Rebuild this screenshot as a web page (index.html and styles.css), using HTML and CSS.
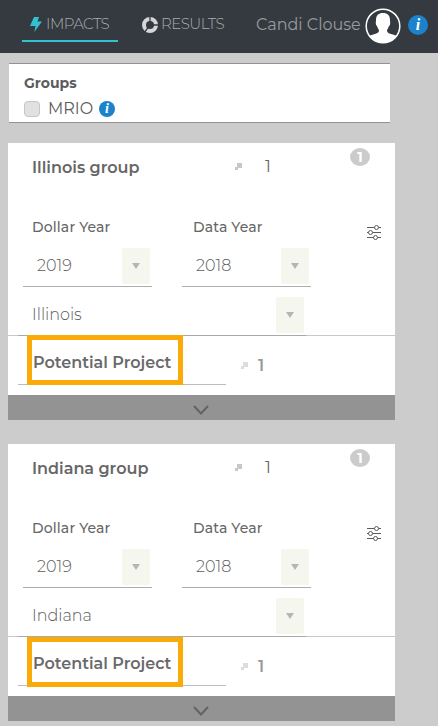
FILE: index.html
```
<!DOCTYPE html>
<html lang="en">
<head>
<meta charset="utf-8">
<title>Impacts</title>
<link rel="stylesheet" href="styles.css">
</head>
<body>
<svg class="defs" aria-hidden="true">
  <symbol id="expand" viewBox="0 0 7 7"><path d="M2 0h5v5H3v2H0V4h2z"/></symbol>
  <symbol id="sliders" viewBox="0 0 14 16"><g fill="none" stroke="#5c5c5c" stroke-width="1"><path d="M0 2.5h7.5M11.5 2.5h2.500M0 7.500h1.500M5.500 7.500h8.500M0 12.500h6.500M10.500 12.500h3.500"/><circle cx="9.500" cy="2.500" r="2"/><circle cx="3.500" cy="7.500" r="2"/><circle cx="8.500" cy="12.500" r="2"/></g></symbol>
  <symbol id="chevron" viewBox="0 0 16 10"><path d="M1 1l7 7.500L15 1" fill="none" stroke="#626262" stroke-width="1.900"/></symbol>
</svg>
<header class="topbar">
  <nav class="tabs">
    <a class="tab active"><svg class="bolt" viewBox="0 0 12 15"><path d="M4 0h5L7.500 4.500H12L4.300 15l1.200-6H0z"/></svg><span class="tab-label">IMPACTS</span></a>
    <a class="tab"><svg class="ring" viewBox="0 0 16 16"><circle cx="8" cy="8" r="6"/><path d="M8 8V-1M8 8h9M8 8l-6 8"/></svg><span class="tab-label">RESULTS</span></a>
  </nav>
  <span class="user">Candi Clouse</span>
  <svg class="avatar" viewBox="0 0 36 36"><circle cx="18" cy="18" r="16.800" fill="#343a40" stroke="#fff" stroke-width="1.500"/><path d="M11 12c0-4.500 2.500-7 7-7s7 2.500 7 7c0 2 .5 2.500 0 4.500-.3 1.200-1 1.500-1.400 2.500-.4 1.300-1 2.200-1.600 3 .1 2.500 1 3 4 4 2.500.8 4.500 1.300 6 2.100A16.800 16.800 0 0 1 18 34.800 16.800 16.800 0 0 1 4 28.100c1.500-.8 3.500-1.300 6-2.100 3-1 4-1.500 4-4-.6-.8-1.200-1.700-1.600-3-.4-1-1.100-1.300-1.400-2.500-.5-2 0-2.500 0-4.500z" fill="#fff"/></svg>
  <span class="info large">i</span>
</header>
<main>
  <section class="groups">
    <h2>Groups</h2>
    <label class="mrio"><span class="checkbox"></span><span class="mrio-label">MRIO</span><span class="info">i</span></label>
  </section>

  <section class="card">
    <div class="card-head"><h3>Illinois group</h3><svg class="expand"><use href="#expand"/></svg><span class="count">1</span><span class="badge">1</span></div>
    <div class="years">
      <div class="field"><span class="label">Dollar Year</span><div class="select"><span>2019</span><i class="drop"></i></div></div>
      <div class="field"><span class="label">Data Year</span><div class="select"><span>2018</span><i class="drop"></i></div></div>
      <svg class="sliders"><use href="#sliders"/></svg>
    </div>
    <div class="region"><div class="region-select"><span>Illinois</span><i class="drop"></i></div></div>
    <div class="project"><div class="project-name"><span>Potential Project</span><i class="highlight"></i></div><svg class="expand pale"><use href="#expand"/></svg><span class="project-count">1</span></div>
    <div class="more"><svg class="chevron"><use href="#chevron"/></svg></div>
  </section>

  <section class="card second">
    <div class="card-head"><h3>Indiana group</h3><svg class="expand"><use href="#expand"/></svg><span class="count">1</span><span class="badge">1</span></div>
    <div class="years">
      <div class="field"><span class="label">Dollar Year</span><div class="select"><span>2019</span><i class="drop"></i></div></div>
      <div class="field"><span class="label">Data Year</span><div class="select"><span>2018</span><i class="drop"></i></div></div>
      <svg class="sliders"><use href="#sliders"/></svg>
    </div>
    <div class="region"><div class="region-select"><span>Indiana</span><i class="drop"></i></div></div>
    <div class="project"><div class="project-name"><span>Potential Project</span><i class="highlight"></i></div><svg class="expand pale"><use href="#expand"/></svg><span class="project-count">1</span></div>
    <div class="more"><svg class="chevron"><use href="#chevron"/></svg></div>
  </section>
</main>
</body>
</html>
```
FILE: styles.css
```
* { box-sizing: border-box; }
body { margin: 0; height: 726px; overflow: hidden; background: #ccc; color: #5c5c5c; font-family: Montserrat, Inter, sans-serif; font-size: 16px; font-weight: 300; line-height: 20px; white-space: nowrap; }
h2, h3 { margin: 0; }
svg { display: block; flex: none; }
.defs { position: absolute; width: 0; height: 0; }

.topbar { display: flex; height: 53px; background: #343a40; color: #a9acae; }
.tabs { display: flex; flex: none; gap: 24px; width: 201px; padding-left: 22px; }
.tab { display: flex; flex: none; height: 42px; padding-top: 14px; }
.tab.active { width: 96px; padding-left: 8px; border-bottom: 2px solid #35c0d1; }
.tab-label { font-size: 15px; letter-spacing: -.55px; }
.bolt { width: 12px; height: 15px; margin: 3px 4px 0 0; fill: #35c0d1; }
.ring { width: 16px; height: 16px; margin: 3px 3px 0 0; }
.ring circle { fill: none; stroke: #d6d6d6; stroke-width: 4; }
.ring path { stroke: #343a40; stroke-width: 1.3; }
.user { flex: none; width: 109px; margin: 15px 0 0 55px; color: #989b9e; font-size: 16px; font-weight: 400; letter-spacing: 0; }
.avatar { width: 36px; height: 36px; margin-top: 8px; }
.info { flex: none; width: 16px; height: 16px; border-radius: 50%; background: #1b82cb; color: #fff; font: italic bold 14px/16px "Liberation Serif", serif; text-align: center; }
.info.large { width: 20px; height: 20px; margin: 15px 0 0 7px; font-size: 16px; line-height: 20px; }

main { padding: 10px 0 0 8px; }
.groups { width: 381px; height: 60px; margin-left: 1px; padding: 9px 0 0 15px; border: solid #929292; border-width: 1px 0; background: #fff; }
.groups h2 { font-size: 14px; font-weight: 700; line-height: 20px; }
.mrio { display: flex; align-items: center; height: 20px; margin-top: 6px; }
.checkbox { width: 16px; height: 16px; border: 1px solid #c6c6c6; border-radius: 4px; background: #e0e1e2; }
.mrio-label { width: 51px; padding-left: 8px; font-weight: 400; }
.mrio .info { margin-left: 8px; }

.card { width: 387px; height: 277px; margin-top: 20px; background: #fff; }
.card.second { margin-top: 24px; }
.card-head { display: flex; height: 75px; padding-left: 24px; }
.card-head h3 { width: 203px; margin-top: 15px; color: #666; font-size: 16px; font-weight: 600; }
.expand { width: 7px; height: 7px; margin-top: 20px; fill: #c8c8c8; }
.count { width: 108px; padding-left: 23px; margin-top: 14px; color: #666; font-weight: 400; }
.badge { width: 20px; height: 18px; margin-top: 5px; border-radius: 50%; background: #cbcbcb; color: #fff; font-size: 14px; font-weight: 700; line-height: 18px; text-align: center; }
.years { display: flex; gap: 30px; height: 78px; padding-left: 15px; }
.field { width: 129px; }
.label { display: block; height: 30px; padding-left: 9px; color: #666; font-size: 14px; font-weight: 500; line-height: 19px; letter-spacing: .15px; }
.field:nth-child(2) .label { padding-left: 11px; }
.select { display: flex; justify-content: space-between; height: 39px; padding: 0 2px 0 14px; border-bottom: 1px solid #adadad; }
.select span { line-height: 35px; }
.drop { display: flex; justify-content: center; align-items: center; width: 28px; height: 36px; border-radius: 2px; background: #f5f6ed; }
.drop::before { content: ""; border: solid transparent; border-width: 6px 4.5px 0; border-top-color: #b5b5b5; }
.sliders { width: 14px; height: 16px; margin: 7px 0 0 26px; }
.region { height: 40px; border-bottom: 1px solid #c8c8c8; }
.region-select { display: flex; justify-content: space-between; width: 288px; height: 40px; margin-left: 10px; padding: 1px 2px 0 14px; border-bottom: 1px solid #aaa; }
.region-select span { line-height: 35px; }
.project { display: flex; height: 59px; padding-left: 10px; }
.project-name { position: relative; width: 208px; height: 49px; padding: 17px 0 0 15px; border-bottom: 1px solid #bcbcbc; color: #6a6a6a; font-weight: 600; }
.highlight { position: absolute; left: 9px; top: -1px; width: 156px; height: 50px; border: 5px solid #faab08; }
.second .highlight { top: 0; }
.expand.pale { margin: 26px 0 0 15px; fill: #ddd; }
.project-count { margin: 20px 0 0 10px; color: #999; font-weight: 600; }
.more { display: flex; justify-content: center; height: 25px; padding: 10px 1px 0 0; background: #939393; }
.chevron { width: 16px; height: 10px; }
```
